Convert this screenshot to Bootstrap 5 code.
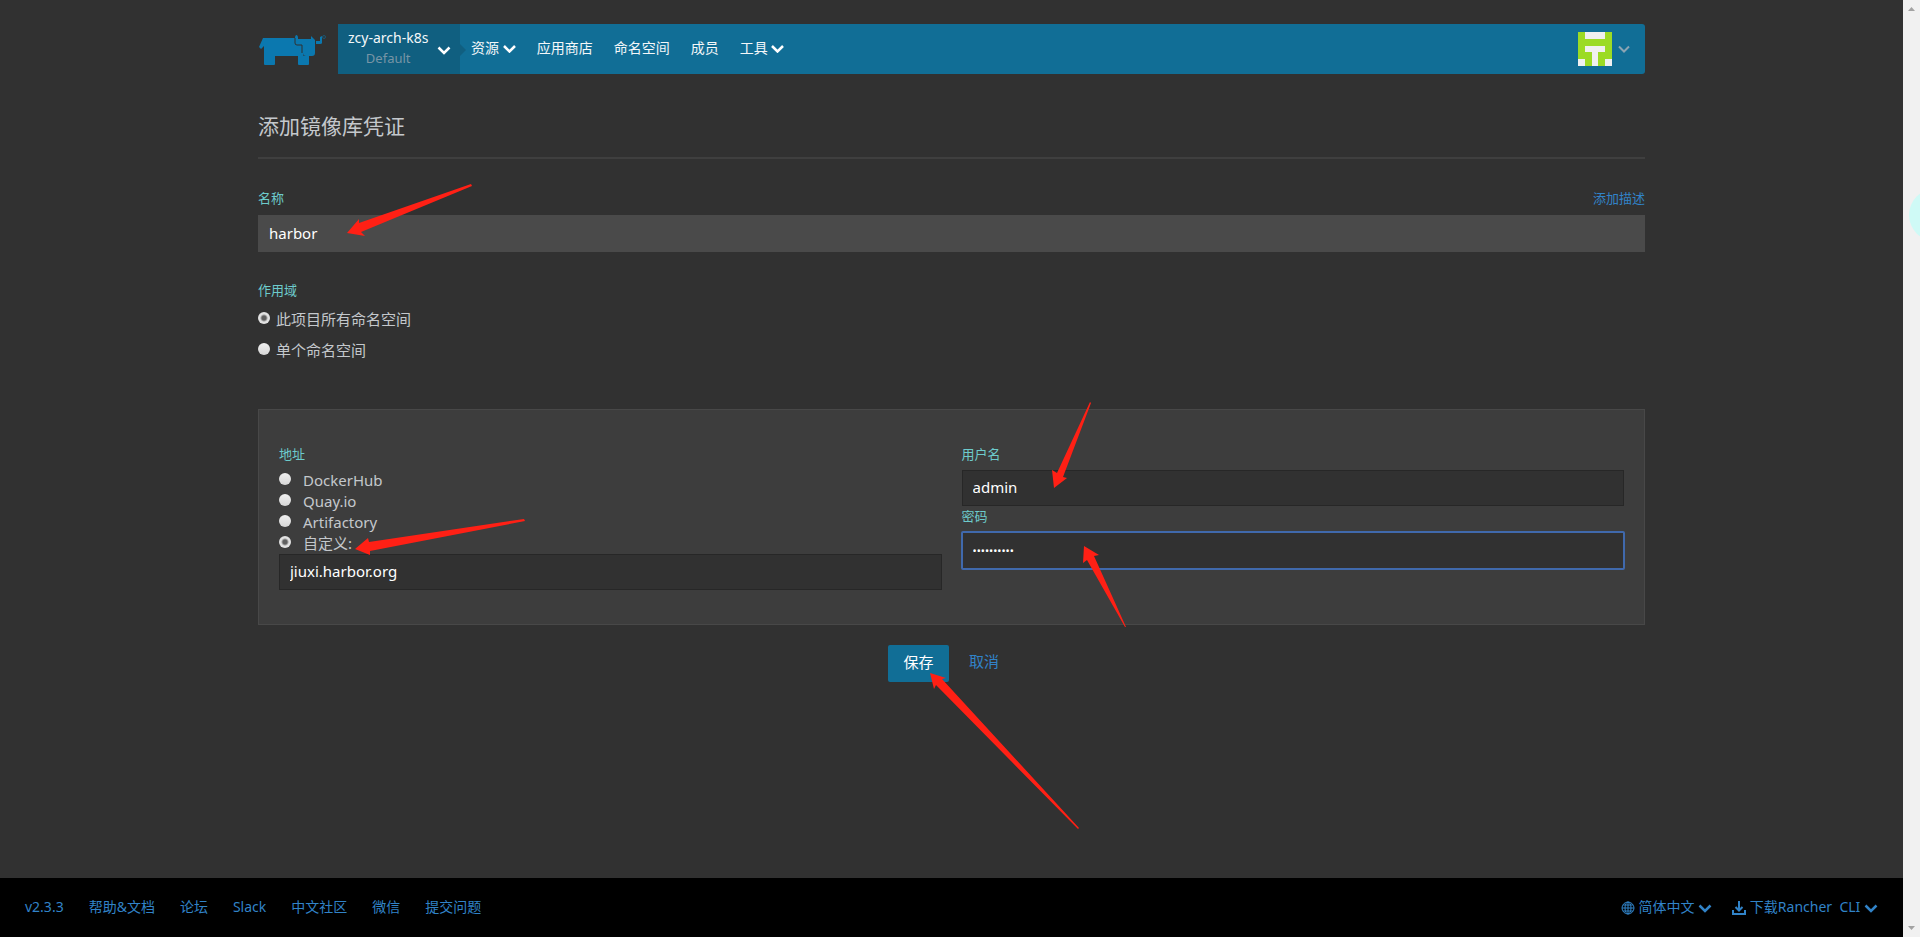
<!DOCTYPE html>
<html lang="zh-CN">
<head>
<meta charset="utf-8">
<meta name="viewport" content="width=device-width, initial-scale=1">
<title>Rancher</title>
<link href="https://cdn.jsdelivr.net/npm/bootstrap@5.3.0/dist/css/bootstrap.min.css" rel="stylesheet">
<style>
html, body { height: 100%; }
body { background: #313131; color: #c4c8cc; font: 15px/21px "Noto Sans", "Noto Sans CJK SC", sans-serif; }
a { color: #3183c8; text-decoration: none; }
.wrap { max-width: 1387px; width: 94%; }
.topbar { padding-top: 24px; }
.mainnav { height: 50px; background: #116e96; border-radius: 0 3px 3px 0; font-size: 14px; }
.mainnav a { color: #f4f7f9; }
.logo { width: 80px; }
.project { width: 122px; background: #105f80; position: relative; padding: 0 9px 2px 10px; }
.project::after { content: ""; position: absolute; left: 100%; top: 20px; border: 6px solid transparent; border-left-color: #105f80; border-right: 0; }
.project small { color: #7795a6; font-size: 13px; }
.menu { gap: 21px; padding: 0 0 4px 11px; }
.account { padding-right: 15px; gap: 6px; }
h1 { font-size: 21px; line-height: 30px; color: #c4c8cc; font-weight: 400; margin: 37px 0 0; padding-bottom: 16px; border-bottom: 2px solid #3f3f3f; }
.tag, .fs13 { font-size: 13px; line-height: 20px; }
.tag { color: #6dcbcc; }
.head { padding: 29px 0 7px; }
.gap-under { margin-bottom: 6px; }
.field { display: block; width: 100%; height: 36px; border: 1px solid #272727; background: #313131; color: #fff; padding: 0 10px 2px; border-radius: 0; }
.field.plain { height: 37px; background: #4a4a4a; border-color: #4a4a4a; }
.field.active { height: 37px; outline: 2px solid #4069ac; outline-offset: -1px; border-radius: 1px; font-size: 11px; padding-bottom: 0; }
.dot { appearance: none; width: 12px; height: 12px; border-radius: 50%; margin: 0 0 3px; background: linear-gradient(#efefef, #d6d6d6); flex: none; }
.dot:checked { background: radial-gradient(circle, #5f5f5f 0 2px, #e2e2e2 4px); }
.scope { gap: 6px; height: 31px; }
.addr { gap: 12px; height: 21px; }
.panel { background: #3d3d3d; border: 1px solid #484848; padding: 34px 20px; margin-top: 43px; min-height: 216px; }
.save { width: 61px; height: 37px; background: #116e96; color: #fff; border: 0; border-radius: 2px; padding-bottom: 3px; }
.foot { background: #000; height: 59px; padding: 0 25px 2px; font-size: 14px; }
.foot-left { gap: 25px; }
.foot-right { gap: 20px; }
.gutter { width: 17px; background: #f1f1f1; position: relative; overflow: hidden; }
.bubble { position: absolute; left: 6px; top: 189px; width: 52px; height: 52px; border-radius: 50%; background: #cffaf6; }
.notes { position: absolute; left: 0; top: 0; pointer-events: none; overflow: visible; }
</style>
</head>
<body class="d-flex">
<div class="d-flex flex-column flex-grow-1 min-vh-100">
  <div class="wrap mx-auto position-relative flex-grow-1">
    <header class="topbar d-flex">
      <a class="logo" href="#" aria-label="Rancher">
        <svg width="70" height="50" viewBox="0 0 70 50" fill="#0b78af">
          <path d="M6 18H38V20H45V22H45V30Q45 32 46 32H51V40Q51 41 50 41H41Q40 41 40 40V32H17V40Q17 41 16 41H7Q6 41 6 40V22L3 25L1 23L5 14H38V20H6Z"/>
          <path d="M38 11Q40 11 40 14V15H53V12L57 16V29Q57 32 54 32H48Q45 32 45 29V21H39Q37 21 37 19V14Q37 12 38 11Z"/>
          <path d="M58 17H62V13L64 12V19Q64 20 62 20H58Z"/>
          <circle cx="66" cy="13" r="1.500" fill="none" stroke="#0b78af" stroke-width=".5"/>
          <path d="M37 14V19Q37 21 39 21H44V29" fill="none" stroke="#313131" stroke-width="1"/>
        </svg>
      </a>
      <nav class="mainnav d-flex flex-grow-1 align-items-center">
        <a href="#" class="project h-100 d-flex align-items-center justify-content-between">
          <span class="text-center"><span class="d-block">zcy-arch-k8s</span><small class="d-block">Default</small></span>
          <svg width="14" height="9" viewBox="0 0 14 9" class="mt-1 flex-shrink-0"><path d="M1.500 1.500L7 7L12.500 1.500" fill="none" stroke="#fff" stroke-width="2.500"/></svg>
        </a>
        <div class="menu d-flex align-items-center flex-grow-1">
          <a href="#">资源 <svg width="13" height="8" viewBox="0 0 13 8"><path d="M1 1L6.500 6.500L12 1" fill="none" stroke="#fff" stroke-width="2.500"/></svg></a>
          <a href="#">应用商店</a>
          <a href="#">命名空间</a>
          <a href="#">成员</a>
          <a href="#">工具 <svg width="13" height="8" viewBox="0 0 13 8"><path d="M1 1L6.500 6.500L12 1" fill="none" stroke="#fff" stroke-width="2.500"/></svg></a>
        </div>
        <a href="#" class="account d-flex align-items-center" aria-label="账户">
          <svg width="34" height="34" viewBox="0 0 5 5" shape-rendering="crispEdges"><path fill="#9cdb25" d="M0 0H5V5H0Z"/><path fill="#f0f0f0" d="M1 0H4V1H1ZM1 2H4V3H3V5H2V3H1ZM0 4H1V5H0ZM4 4H5V5H4Z"/></svg>
          <svg width="12" height="8" viewBox="0 0 12 8"><path d="M1 1.500L6 6.500L11 1.500" fill="none" stroke="#8ba4b3" stroke-width="2"/></svg>
        </a>
      </nav>
    </header>
    <main>
      <h1>添加镜像库凭证</h1>
      <form>
        <div class="head d-flex justify-content-between fs13"><label class="tag" for="name">名称</label><a href="#">添加描述</a></div>
        <input class="field plain" id="name" value="harbor">
        <fieldset class="pt-2">
          <legend class="tag mt-3 mb-1 pt-1">作用域</legend>
          <label class="scope d-flex align-items-center"><input class="dot" type="radio" name="scope" checked>此项目所有命名空间</label>
          <label class="scope d-flex align-items-center"><input class="dot" type="radio" name="scope">单个命名空间</label>
        </fieldset>
        <section class="panel">
          <div class="row g-0">
            <fieldset class="col pe-2 me-1">
              <legend class="tag gap-under">地址</legend>
              <label class="addr d-flex align-items-center"><input class="dot" type="radio" name="addr">DockerHub</label>
              <label class="addr d-flex align-items-center"><input class="dot" type="radio" name="addr">Quay.io</label>
              <label class="addr d-flex align-items-center"><input class="dot" type="radio" name="addr">Artifactory</label>
              <label class="addr d-flex align-items-center"><input class="dot" type="radio" name="addr" checked>自定义:</label>
              <input class="field" value="jiuxi.harbor.org" aria-label="自定义地址">
            </fieldset>
            <div class="col ps-2">
              <label class="tag d-block gap-under" for="user">用户名</label>
              <input class="field" id="user" value="admin">
              <label class="tag d-block gap-under" for="pass">密码</label>
              <input class="field active" id="pass" type="password" value="harbor1234">
            </div>
          </div>
        </section>
        <div class="d-flex justify-content-center align-items-center gap-3 mt-3 pt-1">
          <button type="button" class="save">保存</button>
          <a href="#" class="ms-1 pe-3 pb-1">取消</a>
        </div>
      </form>
    </main>
    <svg class="notes" width="1387" height="860" fill="#ff2015" aria-hidden="true">
      <path d="M89 233L101 219L101 223L213 184L214 186L103 232L107 236Z"/>
      <path d="M97 549L110 538L111 542L266 519L267 521L112 551L112 555Z"/>
      <path d="M796 488L794 470L799 473L832 402L833 403L805 477L809 478Z"/>
      <path d="M826 546L841 555L836 556L868 627L867 627L829 560L825 563Z"/>
      <path d="M672 673L688 678L684 679L821 828L820 829L678 685L676 689Z"/>
    </svg>
  </div>
  <footer class="foot d-flex justify-content-between align-items-center">
    <div class="foot-left d-flex">
      <a href="#">v2.3.3</a><a href="#">帮助&amp;文档</a><a href="#">论坛</a><a href="#">Slack</a><a href="#">中文社区</a><a href="#">微信</a><a href="#">提交问题</a>
    </div>
    <div class="foot-right d-flex">
      <a href="#"><svg width="14" height="14" viewBox="0 0 14 14" fill="none" stroke="#3183c8"><circle cx="7" cy="7" r="6"/><ellipse cx="7" cy="7" rx="3" ry="6"/><path d="M7 1V13M1 7H13M2 4H12M2 10H12"/></svg> 简体中文 <svg width="14" height="9" viewBox="0 0 14 9"><path d="M1.500 1.500L7 7L12.500 1.500" fill="none" stroke="#3183c8" stroke-width="2.500"/></svg></a>
      <a href="#"><svg width="14" height="14" viewBox="0 0 14 14" fill="none" stroke="#3183c8" stroke-width="2"><path d="M7 0V9M3.500 6L7 9.500L10.500 6M1 9V13H13V9"/></svg> 下载Rancher&nbsp; CLI <svg width="14" height="9" viewBox="0 0 14 9"><path d="M1.500 1.500L7 7L12.500 1.500" fill="none" stroke="#3183c8" stroke-width="2.500"/></svg></a>
    </div>
  </footer>
</div>
<aside class="gutter d-flex flex-column justify-content-between align-items-center flex-shrink-0" aria-hidden="true">
  <svg width="17" height="17"><path d="M5 11L8.500 7L12 11Z" fill="#a3a3a3"/></svg>
  <span class="bubble"></span>
  <svg width="17" height="17"><path d="M5 6L8.500 10L12 6Z" fill="#a3a3a3"/></svg>
</aside>
<script src="https://cdn.jsdelivr.net/npm/bootstrap@5.3.0/dist/js/bootstrap.bundle.min.js"></script>
</body>
</html>
